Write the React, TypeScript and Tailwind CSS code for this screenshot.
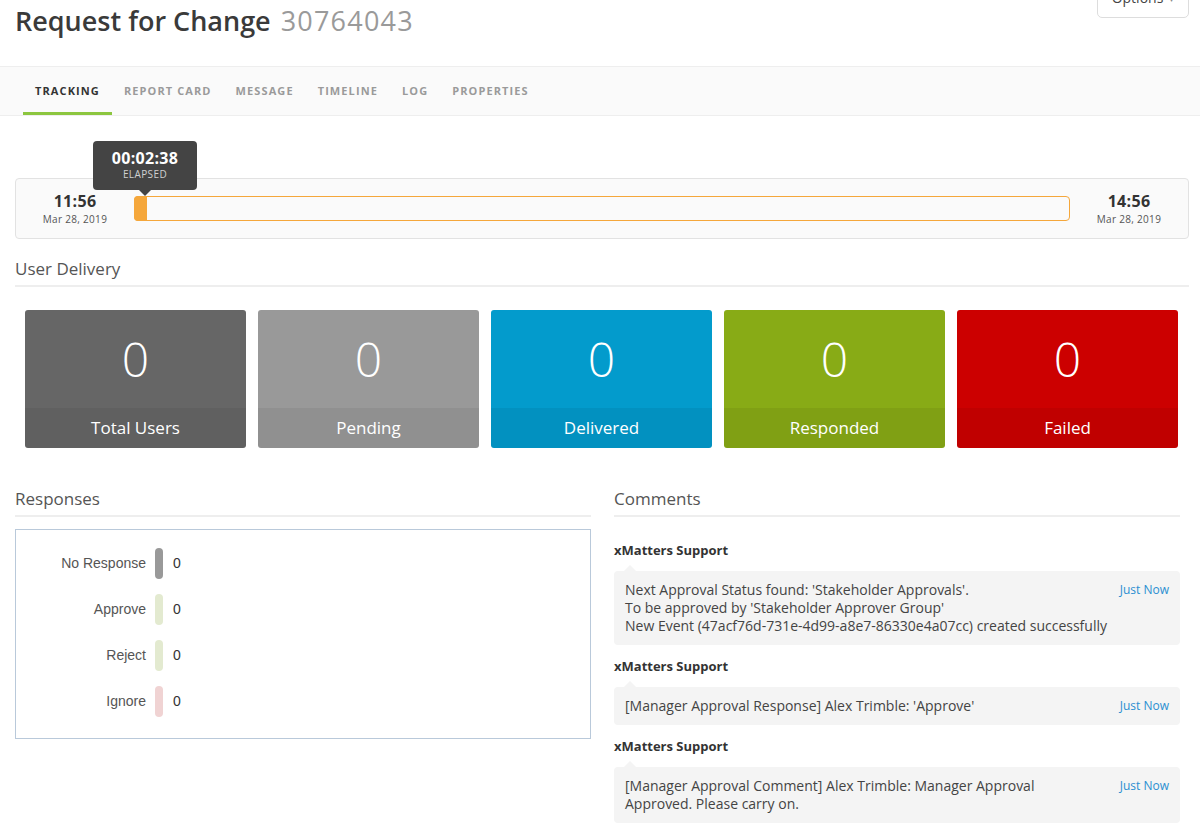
import React from "react";

const tabs = ["Tracking", "Report Card", "Message", "Timeline", "Log", "Properties"];

const cards = [
  { label: "Total Users", bg: "bg-[#666666]" },
  { label: "Pending", bg: "bg-[#999999]" },
  { label: "Delivered", bg: "bg-[#039bcc]" },
  { label: "Responded", bg: "bg-[#88ab16]" },
  { label: "Failed", bg: "bg-[#cc0000]" },
];

const responses = [
  { label: "No Response", pill: "bg-[#999999]" },
  { label: "Approve", pill: "bg-[#e3ead0]" },
  { label: "Reject", pill: "bg-[#e3ead0]" },
  { label: "Ignore", pill: "bg-[#f0d3d3]" },
];

const comments = [
  [
    "Next Approval Status found: 'Stakeholder Approvals'.",
    "To be approved by 'Stakeholder Approver Group'",
    "New Event (47acf76d-731e-4d99-a8e7-86330e4a07cc) created successfully",
  ],
  ["[Manager Approval Response] Alex Trimble: 'Approve'"],
  ["[Manager Approval Comment] Alex Trimble: Manager Approval", "Approved. Please carry on."],
];

function TimeStamp({ time }: { time: string }) {
  return (
    <div className="w-[118px] flex flex-col items-center">
      <div className="text-[16px] leading-[18px] font-bold text-[#333] tracking-[0.3px]">{time}</div>
      <div className="text-[10px] leading-[14px] mt-[2px] text-[#555] tracking-[0.3px]">Mar 28, 2019</div>
    </div>
  );
}

export default function App() {
  return (
    <div className="w-[1200px] h-[839px] overflow-hidden bg-white font-['Open_Sans',sans-serif] text-[#333]">
      {/* header */}
      <div className="h-[66px] flex justify-between items-start pl-[15px] pr-[11px]">
        <h1 className="mt-[2px] text-[27px] leading-[38px] font-semibold text-[#3a3a3a]">
          Request for Change{" "}
          <span className="font-normal text-[#9a9a9a] ml-[3px] tracking-[1.2px]">30764043</span>
        </h1>
        <button className="-mt-[18px] h-[36px] w-[92px] rounded-[5px] border border-[#ddd] bg-white text-[14px] leading-[20px] text-[#444] pt-[5px] flex justify-center items-start gap-[6px]">
          <span>Options</span>
          <span className="text-[10px] text-[#888]">▾</span>
        </button>
      </div>

      {/* tabs */}
      <div className="h-[50px] border-t border-b border-[#eee] bg-[#fafafa] px-[23px] flex">
        {tabs.map((t, i) => (
          <div
            key={t}
            className={
              "px-[12px] flex items-center text-[11px] font-bold uppercase tracking-[1.1px] " +
              (i === 0 ? "text-[#333] border-b-[3px] border-[#8cc63f] pt-[3px]" : "text-[#9a9a9a]")
            }
          >
            {t}
          </div>
        ))}
      </div>

      {/* timeline */}
      <div className="ml-[15px] mr-[11px] mt-[62px] h-[61px] border border-[#e2e2e2] rounded-[4px] bg-[#fafafa] flex items-center">
        <TimeStamp time="11:56" />
        <div className="flex-1 h-[25px] border border-[#f5a73b] rounded-[4px] relative">
          <div className="absolute left-[-1px] top-[-1px] h-[25px] w-[13px] bg-[#f5a73b] rounded-l-[4px]" />
          <div className="absolute left-[-42px] top-[-56px] w-[104px] h-[49px] bg-[#444] rounded-[4px] flex flex-col items-center pt-[8px]">
            <div className="text-[16px] leading-[18px] font-bold text-white tracking-[0.3px]">00:02:38</div>
            <div className="text-[10px] leading-[13px] mt-[1px] text-[#d0d0d0] tracking-[0.4px]">ELAPSED</div>
            <div className="absolute bottom-[-6px] left-[46px] w-0 h-0 border-l-[6px] border-r-[6px] border-t-[6px] border-l-transparent border-r-transparent border-t-[#444]" />
          </div>
        </div>
        <TimeStamp time="14:56" />
      </div>

      {/* user delivery */}
      <div className="ml-[15px] mr-[11px] mt-[20px] border-b-2 border-[#eee] pb-[6px]">
        <h2 className="text-[17px] leading-[20px] text-[#555]">User Delivery</h2>
      </div>
      <div className="ml-[25px] w-[1153px] mt-[23px] grid grid-cols-5 gap-[12px]">
        {cards.map((c) => (
          <div key={c.label} className={"h-[138px] rounded-[3px] overflow-hidden flex flex-col text-white " + c.bg}>
            <div className="h-[98px] flex items-center justify-center text-[48px] font-light leading-none">0</div>
            <div className="h-[40px] bg-black/[0.06] flex items-center justify-center text-[17px] font-medium">{c.label}</div>
          </div>
        ))}
      </div>

      {/* responses + comments */}
      <div className="mt-[41px] flex px-[15px] gap-[23px]">
        <div className="w-[576px]">
          <div className="border-b-2 border-[#eee] pb-[6px]">
            <h2 className="text-[17px] leading-[20px] text-[#555]">Responses</h2>
          </div>
          <div className="mt-[12px] h-[210px] border border-[#b9c9da] pt-[10px] font-['Liberation_Sans',Arial,sans-serif]">
            {responses.map((r) => (
              <div key={r.label} className="h-[46px] flex items-center">
                <div className="w-[130px] text-right text-[14px] text-[#555]">{r.label}</div>
                <div className={"ml-[9px] w-[8px] h-[31px] rounded-full " + r.pill} />
                <div className="ml-[10px] text-[14px] text-[#333]">0</div>
              </div>
            ))}
          </div>
        </div>

        <div className="w-[566px]">
          <div className="border-b-2 border-[#eee] pb-[6px]">
            <h2 className="text-[17px] leading-[20px] text-[#555]">Comments</h2>
          </div>
          <div className="mt-[23px]">
            {comments.map((lines, i) => (
              <div key={i} className={i > 0 ? "mt-[11px]" : ""}>
                <div className="text-[13px] leading-[20px] font-bold text-[#333]">xMatters Support</div>
                <div className="relative mt-[11px] bg-[#f4f4f4] rounded-[4px] px-[11px] py-[10px] flex justify-between">
                  <div className="absolute top-[-6px] left-[10px] w-0 h-0 border-l-[6px] border-r-[6px] border-b-[6px] border-l-transparent border-r-transparent border-b-[#f4f4f4]" />
                  <div className="text-[14px] leading-[18px] text-[#444]">
                    {lines.map((l, j) => (
                      <div key={j}>{l}</div>
                    ))}
                  </div>
                  <div className="text-[12px] leading-[18px] text-[#2b8fd1] whitespace-nowrap">Just Now</div>
                </div>
              </div>
            ))}
          </div>
        </div>
      </div>
    </div>
  );
}
